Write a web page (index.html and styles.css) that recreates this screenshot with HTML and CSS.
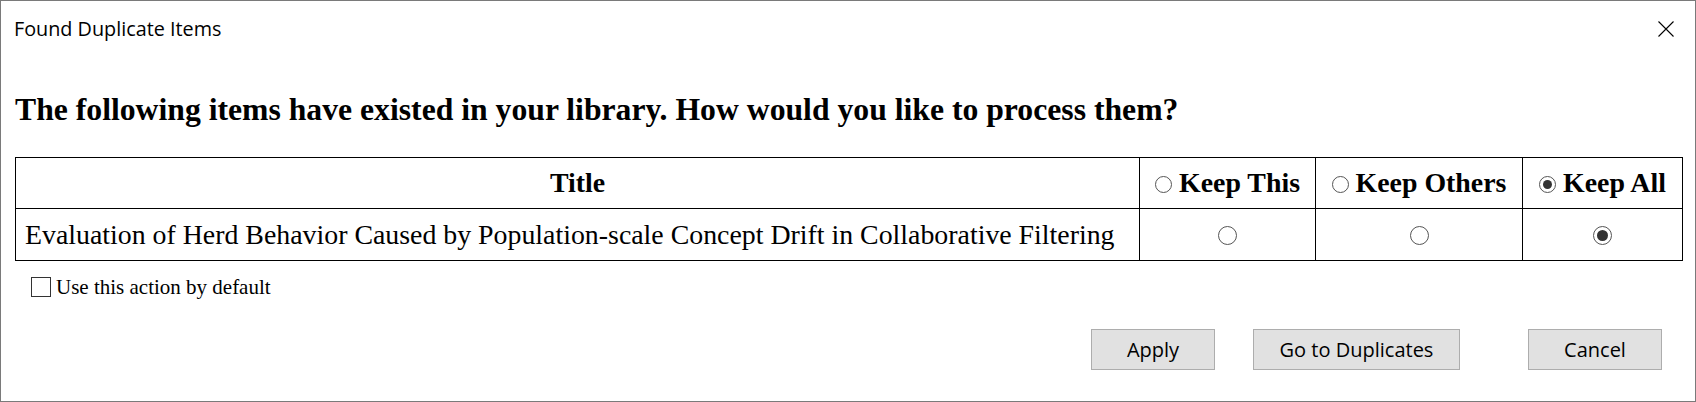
FILE: index.html
```html
<!DOCTYPE html>
<html>
<head>
<meta charset="utf-8">
<link rel="stylesheet" href="styles.css">
</head>
<body>
<div class="window">
  <div class="titlebar">
    <span class="title">Found Duplicate Items</span>
    <svg class="close" width="16" height="16" viewBox="0 0 16 16"><path d="M0.5 0.5 L15.5 15.5 M15.5 0.5 L0.5 15.5" stroke="#000" stroke-width="1.1" fill="none"/></svg>
  </div>
  <div class="content">
    <h1 class="heading">The following items have existed in your library. How would you like to process them?</h1>
    <table class="dup-table">
      <colgroup>
        <col class="c-title"><col class="c-this"><col class="c-others"><col class="c-all">
      </colgroup>
      <thead>
        <tr>
          <th>Title</th>
          <th><span class="radio small"></span>Keep This</th>
          <th><span class="radio small"></span>Keep Others</th>
          <th><span class="radio small checked"></span>Keep All</th>
        </tr>
      </thead>
      <tbody>
        <tr>
          <td class="item-title">Evaluation of Herd Behavior Caused by Population-scale Concept Drift in Collaborative Filtering</td>
          <td class="center"><span class="radio"></span></td>
          <td class="center"><span class="radio"></span></td>
          <td class="center"><span class="radio checked"></span></td>
        </tr>
      </tbody>
    </table>
    <label class="default-row"><span class="checkbox"></span>Use this action by default</label>
    <div class="buttons">
      <button class="btn btn-apply">Apply</button>
      <button class="btn btn-goto">Go to Duplicates</button>
      <button class="btn btn-cancel">Cancel</button>
    </div>
  </div>
</div>
</body>
</html>
```
FILE: styles.css
```css
* { box-sizing: border-box; }
html, body { margin: 0; padding: 0; background: #fff; }
.window {
  width: 1696px;
  height: 402px;
  border: 1px solid #7a7a7a;
  background: #fff;
  display: flex;
  flex-direction: column;
}
.titlebar {
  height: 55px;
  display: flex;
  align-items: center;
  justify-content: space-between;
  padding: 0 21px 0 13px;
}
.title {
  font-family: "Open Sans", "Noto Sans", sans-serif;
  font-size: 19.8px;
  color: #000;
}
.close { display: block; }
.content {
  padding: 0 0 0 14px;
  font-family: "Liberation Serif", "Times New Roman", serif;
}
.heading {
  margin: 35px 0 0 0;
  font-size: 31.7px;
  font-weight: bold;
  line-height: 38px;
  height: 66px;
}
.dup-table {
  border-collapse: collapse;
  width: 1667px;
  table-layout: fixed;
  font-size: 27.85px;
}
.c-title { width: 1124px; }
.c-this { width: 176px; }
.c-others { width: 207px; }
.c-all { width: 160px; }
.dup-table th, .dup-table td {
  border: 1px solid #000;
  padding: 0;
  text-align: center;
  white-space: nowrap;
}
.dup-table th { height: 51px; font-weight: bold; }
.dup-table td { height: 52px; }
.dup-table td.item-title { text-align: left; padding-left: 9px; font-weight: normal; }
.radio {
  display: inline-block;
  width: 19px;
  height: 19px;
  border: 1px solid #555;
  border-radius: 50%;
  background: #fff;
  vertical-align: middle;
  position: relative;
  margin-top: -3px;
}
.radio.small { width: 17px; height: 17px; margin-right: 7px; }
.radio.checked::after {
  content: "";
  position: absolute;
  left: 3px; top: 3px; right: 3px; bottom: 3px;
  border-radius: 50%;
  background: #333;
}
.default-row {
  display: flex;
  align-items: center;
  margin: 16px 0 0 16px;
  font-size: 21px;
  height: 20px;
}
.checkbox {
  width: 20px;
  height: 20px;
  border: 1px solid #333;
  background: #fff;
  margin-right: 5px;
}
.buttons {
  display: flex;
  justify-content: flex-end;
  margin-top: 32px;
  padding-right: 33px;
}
.btn {
  height: 41px;
  background: #e1e1e1;
  border: 1px solid #adadad;
  font-family: "Open Sans", "Noto Sans", sans-serif;
  font-size: 20px;
  color: #000;
  padding: 0;
}
.btn-apply { width: 124px; }
.btn-goto { width: 207px; margin-left: 38px; }
.btn-cancel { width: 134px; margin-left: 68px; }
```
